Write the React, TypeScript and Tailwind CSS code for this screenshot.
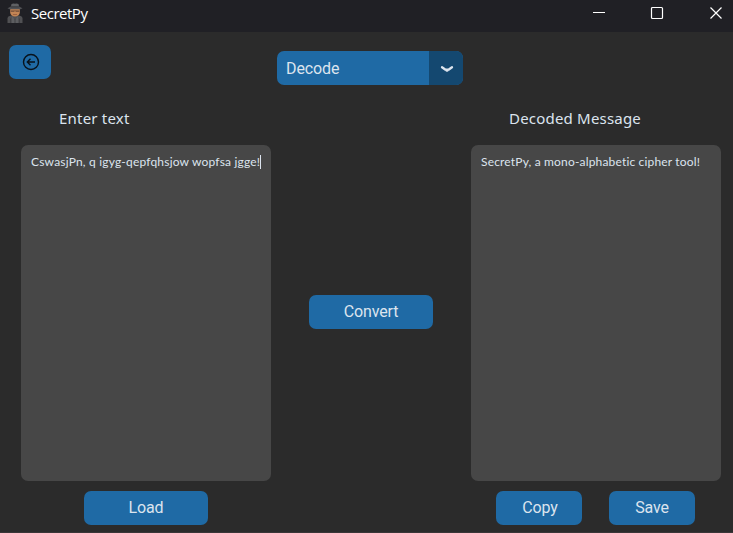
import type { ReactNode } from 'react';

function Detective() {
  return (
    <svg className="mt-[3px] ml-[7px] shrink-0" width="16" height="20" viewBox="0 0 16 20">
      <path d="M.5 20v-4.500Q.5 13 4 12.500h8q3.500.5 3.500 3V20z" fill="#505053" />
      <path d="M5 13l3 4 3-4v7H5z" fill="#5d5e61" />
      <path d="M3.200 5.500h9.600V10Q12 13.200 8 13.500 4 13.200 3.200 10z" fill="#c28555" />
      <path d="M3.800 7.400h8.400v1.300H9L8 8l-1 .7H3.800z" fill="#694a38" />
      <path d="M6 11h4v.8H6z" fill="#94593d" />
      <path d="M4.500 1Q6 0 8 .7 10 0 11.500 1l.8 3.500H3.700z" fill="#606164" />
      <path d="M.5 5.200l3.500-1.700h8l3.500 1.700-2 1.100h-11z" fill="#515256" />
      <path d="M3.700 3.400h8.600v1H3.700z" fill="#38383c" />
      <path d="M7.500 16h1v4h-1zM3 15.500h1V20H3zM12 15.500h1V20h-1z" fill="#414144" />
    </svg>
  );
}

function TitleBar() {
  return (
    <header className="flex h-8 shrink-0 items-start bg-[#202025]">
      <Detective />
      <span className="ml-2 mt-[2px] text-[15px] leading-[22px] tracking-[-0.48px] text-white font-['Open_Sans',sans-serif]">SecretPy</span>
      <svg className="ml-auto mr-[9px] mt-[5px]" width="132" height="16" fill="none" stroke="white">
        <path d="M1 7.500h12" />
        <rect x="59.500" y="2.500" width="11" height="11" rx="1" strokeWidth="1.200" />
        <path d="M118.500 2.500l11 11M129.500 2.500l-11 11" strokeWidth="1.200" />
      </svg>
    </header>
  );
}

function Button({ children, className }: { children: ReactNode; className: string }) {
  return (
    <button className={`flex h-[34px] items-center justify-center rounded-[7px] bg-[#1f6aa5] text-base leading-5 tracking-[-0.12px] text-[#dce4ee] ${className}`}>
      {children}
    </button>
  );
}

function Heading({ children }: { children: ReactNode }) {
  return (
    <h2 className="ml-[38px] mt-[7px] h-[38px] whitespace-nowrap text-[15px] leading-[22px] tracking-[0.2px] font-['Noto_Sans',sans-serif]">
      {children}
    </h2>
  );
}

export default function App() {
  return (
    <div className="flex h-[533px] w-[733px] flex-col overflow-hidden border-b border-[#3a3638] bg-[#2b2b2b] font-[Roboto,sans-serif] text-[#dce4ee]">
      <TitleBar />
      <div className="flex h-[68px] items-start pl-[9px] pt-[13px]">
        <Button className="w-[42px]">
          <svg className="ml-[2px]" width="18" height="18" viewBox="0 0 18 18" fill="none" stroke="#08121b" strokeWidth="1.400">
            <circle cx="9" cy="9" r="7.500" />
            <path d="M13 9H5.500M8.500 5.800L5.300 9l3.200 3.200" />
          </svg>
        </Button>
        <div className="ml-[226px] mt-[6px] flex h-[34px] w-[186px] overflow-hidden rounded-[7px] bg-[#1f6aa5]">
          <span className="flex-1 pl-[9px] text-base leading-[35px] tracking-[-0.12px]">Decode</span>
          <div className="flex w-[34px] items-center justify-center bg-[#144870]">
            <svg className="ml-[2px] mt-[2px]" width="14" height="8" fill="none" stroke="#dce4ee" strokeWidth="2.300" strokeLinecap="round" strokeLinejoin="round">
              <path d="M2 2.200l3.500 2.500h3L12 2.200" />
              <path d="M6.500 5.500h1" />
            </svg>
          </div>
        </div>
      </div>
      <main className="flex flex-1 pl-[21px]">
        <section className="w-[250px]">
          <Heading>Enter text</Heading>
          <div className="h-[336px] rounded-[7px] bg-[#474747] px-[10px] pt-[9px]">
            <div className="flex h-4 items-center">
              <span className="whitespace-nowrap text-[12px] leading-4 tracking-[0.19px] font-[Lato,sans-serif]">CswasjPn, q igyg-qepfqhsjow wopfsa jgge!</span>
              <span className="h-[14px] w-px shrink-0 bg-[#dce4ee]" />
            </div>
          </div>
          <Button className="ml-[63px] mt-[10px] w-[124px]">Load</Button>
        </section>
        <section className="w-[200px] pl-[38px] pt-[195px]">
          <Button className="w-[124px]">Convert</Button>
        </section>
        <section className="w-[250px]">
          <Heading>Decoded Message</Heading>
          <div className="h-[336px] rounded-[7px] bg-[#474747] px-[10px] pt-[9px]">
            <span className="block whitespace-nowrap text-[12px] leading-4 tracking-[0.17px] font-[Lato,sans-serif]">SecretPy, a mono-alphabetic cipher tool!</span>
          </div>
          <div className="mt-[10px] flex gap-[27px] pl-[25px]">
            <Button className="w-[86px] pl-[2px]">Copy</Button>
            <Button className="w-[86px]">Save</Button>
          </div>
        </section>
      </main>
    </div>
  );
}
